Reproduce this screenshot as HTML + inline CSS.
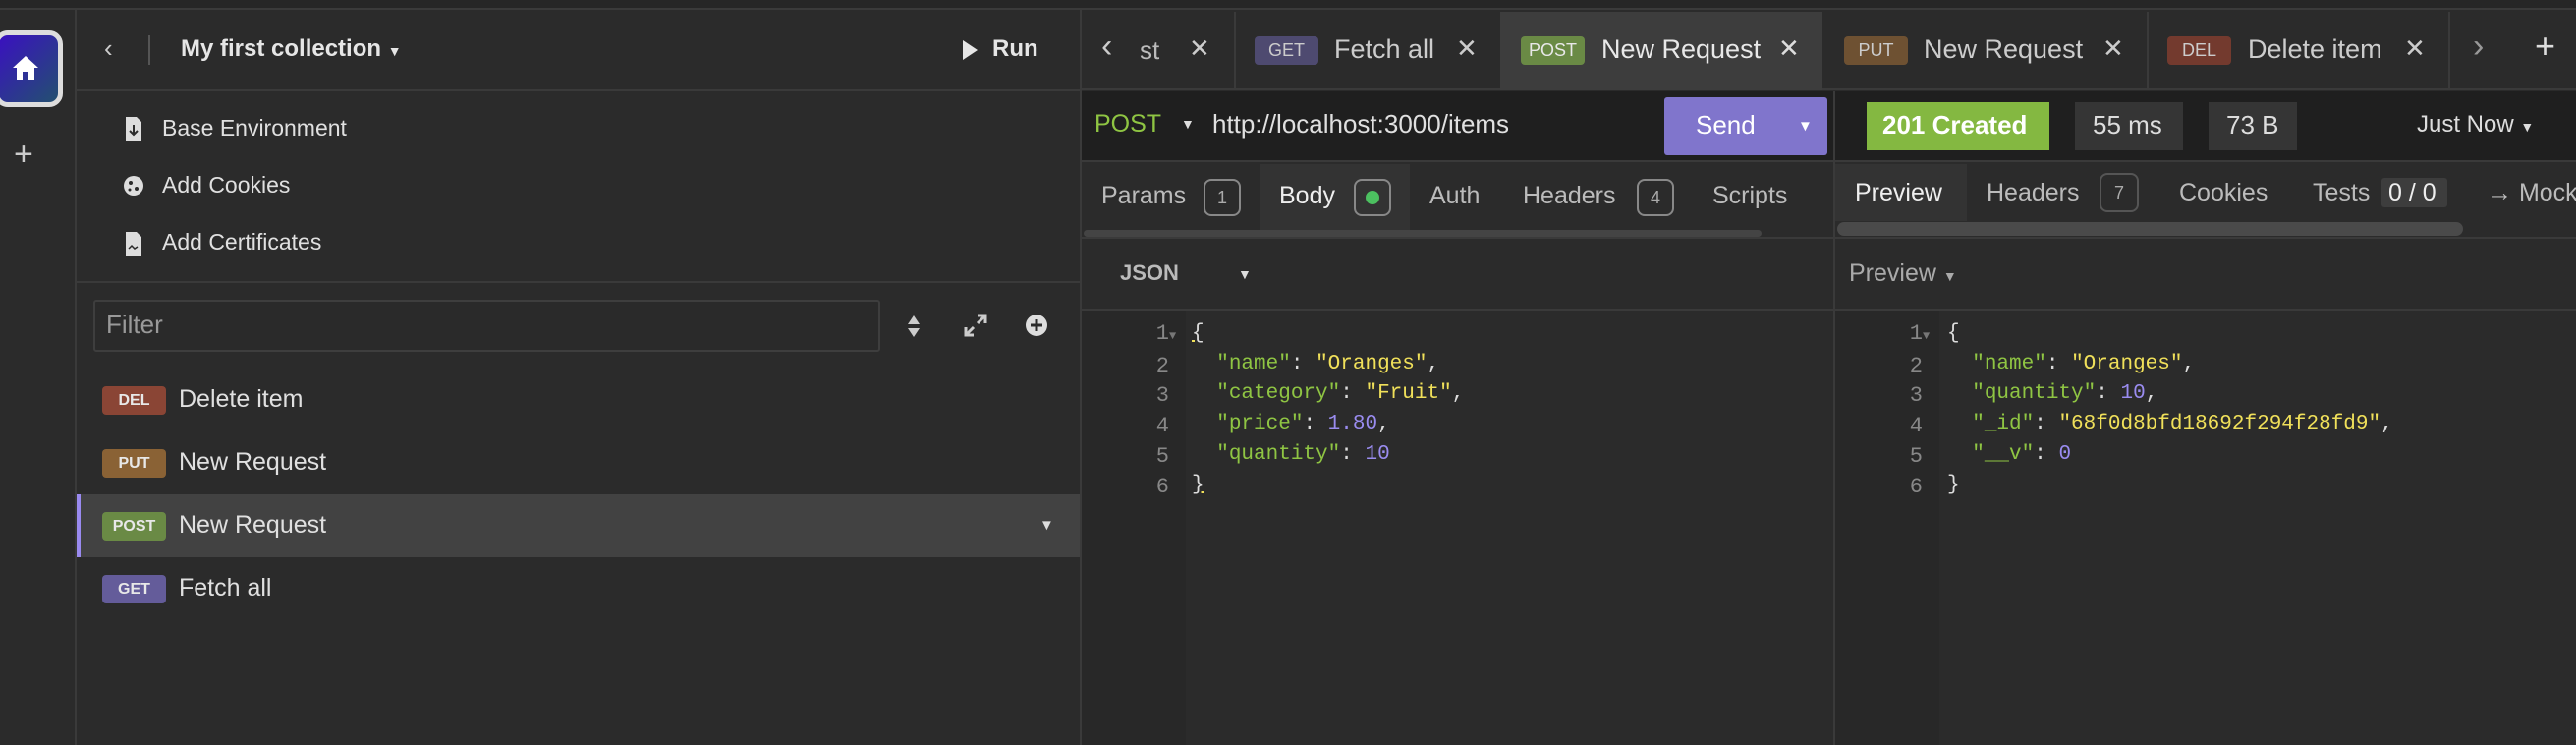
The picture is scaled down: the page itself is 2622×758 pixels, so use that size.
<!DOCTYPE html>
<html><head><meta charset="utf-8"><style>
*{margin:0;padding:0;box-sizing:border-box}
body{width:2622px;height:758px;background:#2b2b2b;font-family:"Liberation Sans",sans-serif;color:#ddd;position:relative;overflow:hidden}
.a{position:absolute}
.t{position:absolute;white-space:nowrap}
.b{position:absolute;border-radius:4px;font-size:16px;color:#e8e8e8;text-align:center;line-height:29px;height:29px;width:65px;font-weight:bold}
.mono{font-family:"Liberation Mono",monospace;font-size:21px}
.k{color:#8fc543}.s{color:#f0e05a}.n{color:#9a8cf0}
.ln{color:#888;text-align:right;width:40px}
</style></head><body>
<div class="a" style="left:0;top:0;width:2622px;height:10px;background:#262626;border-bottom:2px solid #3a3a3a"></div>
<div class="a" style="left:76px;top:10px;width:2px;height:748px;background:#3a3a3a"></div>
<div class="a" style="left:-6px;top:31px;width:70px;height:78px;border:5px solid #ddd;border-radius:14px;background:linear-gradient(135deg,#3a10c0,#235070)"></div>
<svg class="a" style="left:12px;top:55px" width="28" height="28" viewBox="0 0 28 28"><path d="M14 2 L27 14 H23 V26 H17 V18 H11 V26 H5 V14 H1 Z" fill="#fff"/></svg>
<div class="t" style="left:14px;top:138px;font-size:34px;color:#ccc;font-weight:300">+</div>
<div class="a" style="left:78px;top:91px;width:1022px;height:2px;background:#3a3a3a"></div>
<div class="t" style="left:106px;top:34px;font-size:26px;color:#ccc">‹</div>
<div class="a" style="left:151px;top:36px;width:2px;height:30px;background:#555"></div>
<div class="t" style="left:184px;top:36px;font-size:24px;font-weight:bold;color:#e6e6e6">My first collection <span style="font-size:14px">▼</span></div>
<svg class="a" style="left:978px;top:40px" width="18" height="22"><path d="M2 1 L17 11 L2 21 Z" fill="#e6e6e6"/></svg>
<div class="t" style="left:1010px;top:36px;font-size:24px;font-weight:bold;color:#e6e6e6">Run</div>
<svg class="a" style="left:126px;top:118px" width="20" height="26"><path d="M2 1h11l5 5v19H2z" fill="#ddd"/><path d="M10 9v10m-4-4l4 4 4-4" stroke="#2b2b2b" stroke-width="2" fill="none"/></svg>
<div class="t" style="left:165px;top:117px;font-size:23px;color:#e0e0e0">Base Environment</div>
<svg class="a" style="left:125px;top:177px" width="22" height="24"><circle cx="11" cy="12" r="10" fill="#ddd"/><circle cx="8" cy="9" r="2" fill="#2b2b2b"/><circle cx="14" cy="15" r="2" fill="#2b2b2b"/><circle cx="7" cy="16" r="1.5" fill="#2b2b2b"/></svg>
<div class="t" style="left:165px;top:175px;font-size:23px;color:#e0e0e0">Add Cookies</div>
<svg class="a" style="left:126px;top:235px" width="20" height="26"><path d="M2 1h11l5 5v19H2z" fill="#ddd"/><path d="M5 18l3-3 3 3 3-2" stroke="#2b2b2b" stroke-width="1.5" fill="none"/></svg>
<div class="t" style="left:165px;top:233px;font-size:23px;color:#e0e0e0">Add Certificates</div>
<div class="a" style="left:78px;top:286px;width:1022px;height:2px;background:#3a3a3a"></div>
<div class="a" style="left:95px;top:305px;width:801px;height:53px;border:2px solid #3e3e3e;border-radius:3px;background:#2a2a2a"></div>
<div class="t" style="left:108px;top:315px;font-size:26px;color:#999">Filter</div>
<svg class="a" style="left:922px;top:320px" width="16" height="24"><path d="M8 1L14 10H2zM8 23L14 14H2z" fill="#ccc"/></svg>
<svg class="a" style="left:980px;top:318px" width="26" height="26"><path d="M15 3h8v8M23 3L15 11M11 23H3v-8M3 23l8-8" stroke="#ccc" stroke-width="3" fill="none"/></svg>
<svg class="a" style="left:1042px;top:318px" width="26" height="26"><circle cx="13" cy="13" r="11" fill="#ddd"/><path d="M13 7v12M7 13h12" stroke="#2b2b2b" stroke-width="3"/></svg>
<div class="b" style="left:104px;top:393px;background:#8a4535">DEL</div>
<div class="t" style="left:182px;top:392px;font-size:25px;color:#e0e0e0">Delete item</div>
<div class="b" style="left:104px;top:457px;background:#8a6235">PUT</div>
<div class="t" style="left:182px;top:456px;font-size:25px;color:#e0e0e0">New Request</div>
<div class="a" style="left:78px;top:503px;width:1022px;height:64px;background:#424242"></div>
<div class="a" style="left:78px;top:503px;width:4px;height:64px;background:#9a8af0"></div>
<div class="b" style="left:104px;top:521px;background:#6a8a45">POST</div>
<div class="t" style="left:182px;top:520px;font-size:25px;color:#e0e0e0">New Request</div>
<div class="t" style="left:1058px;top:526px;font-size:15px;color:#ddd">▼</div>
<div class="b" style="left:104px;top:585px;background:#645c9a">GET</div>
<div class="t" style="left:182px;top:584px;font-size:25px;color:#e0e0e0">Fetch all</div>
<div class="a" style="left:1099px;top:10px;width:2px;height:748px;background:#3a3a3a"></div>
<div class="a" style="left:1101px;top:12px;width:1521px;height:80px;background:#2b2b2b;border-bottom:2px solid #3a3a3a"></div>
<div class="a" style="left:1527px;top:12px;width:328px;height:80px;background:#3d3d3d"></div>
<div class="a" style="left:1256px;top:12px;width:2px;height:80px;background:#3a3a3a"></div>
<div class="a" style="left:2185px;top:12px;width:2px;height:80px;background:#3a3a3a"></div>
<div class="a" style="left:2492px;top:12px;width:2px;height:80px;background:#3a3a3a"></div>
<div class="t" style="left:1121px;top:28px;font-size:34px;color:#ccc">‹</div>
<div class="t" style="left:1160px;top:36px;font-size:26px;color:#bbb">st</div>
<div class="t" style="left:1210px;top:34px;font-size:26px;color:#ccc">✕</div>
<div class="b" style="left:1277px;top:37px;background:#4e4a70;color:#ccc;font-size:18px;font-weight:normal">GET</div>
<div class="t" style="left:1358px;top:35px;font-size:27px;color:#ccc">Fetch all</div>
<div class="t" style="left:1482px;top:34px;font-size:26px;color:#ccc">✕</div>
<div class="b" style="left:1548px;top:37px;background:#6a8a45;font-size:18px;font-weight:normal">POST</div>
<div class="t" style="left:1630px;top:35px;font-size:27px;color:#e8e8e8">New Request</div>
<div class="t" style="left:1810px;top:34px;font-size:26px;color:#ddd">✕</div>
<div class="b" style="left:1877px;top:37px;background:#6e5132;color:#ccc;font-size:18px;font-weight:normal">PUT</div>
<div class="t" style="left:1958px;top:35px;font-size:27px;color:#ccc">New Request</div>
<div class="t" style="left:2140px;top:34px;font-size:26px;color:#ccc">✕</div>
<div class="b" style="left:2206px;top:37px;background:#733a2e;color:#ccc;font-size:18px;font-weight:normal">DEL</div>
<div class="t" style="left:2288px;top:35px;font-size:27px;color:#ccc">Delete item</div>
<div class="t" style="left:2447px;top:34px;font-size:26px;color:#ccc">✕</div>
<div class="t" style="left:2517px;top:28px;font-size:34px;color:#999">›</div>
<div class="t" style="left:2580px;top:26px;font-size:36px;color:#ddd">+</div>
<div class="a" style="left:1101px;top:93px;width:1521px;height:72px;background:#1f1f1f;border-bottom:2px solid #3a3a3a"></div>
<div class="a" style="left:1866px;top:93px;width:2px;height:665px;background:#3a3a3a"></div>
<div class="t" style="left:1114px;top:112px;font-size:25px;color:#8fc543">POST</div>
<div class="t" style="left:1202px;top:118px;font-size:14px;color:#ddd">▼</div>
<div class="t" style="left:1234px;top:111px;font-size:26px;color:#e0e0e0">http://localhost:3000/items</div>
<div class="a" style="left:1694px;top:99px;width:166px;height:59px;background:#8075cc;border-radius:3px"></div>
<div class="t" style="left:1726px;top:112px;font-size:26px;color:#fff">Send</div>
<div class="t" style="left:1830px;top:120px;font-size:15px;color:#fff">▼</div>
<div class="a" style="left:1900px;top:104px;width:186px;height:49px;background:#84b841"></div>
<div class="t" style="left:1916px;top:112px;font-size:26px;color:#fff;font-weight:bold">201 Created</div>
<div class="a" style="left:2112px;top:104px;width:110px;height:49px;background:#353535"></div>
<div class="t" style="left:2130px;top:112px;font-size:26px;color:#ddd">55 ms</div>
<div class="a" style="left:2248px;top:104px;width:90px;height:49px;background:#353535"></div>
<div class="t" style="left:2266px;top:112px;font-size:26px;color:#ddd">73 B</div>
<div class="t" style="left:2460px;top:113px;font-size:24px;color:#ddd">Just Now <span style="font-size:14px">▼</span></div>
<div class="a" style="left:1101px;top:167px;width:765px;height:68px;background:#2b2b2b"></div>
<div class="a" style="left:1283px;top:167px;width:152px;height:68px;background:#333"></div>
<div class="t" style="left:1121px;top:185px;font-size:25px;color:#bbb">Params</div>
<div class="a" style="left:1225px;top:182px;width:38px;height:38px;border:2px solid #888;border-radius:8px;font-size:18px;color:#aaa;text-align:center;line-height:34px">1</div>
<div class="t" style="left:1302px;top:185px;font-size:25px;color:#eee">Body</div>
<div class="a" style="left:1378px;top:182px;width:38px;height:38px;border:2px solid #888;border-radius:8px"></div>
<div class="a" style="left:1390px;top:194px;width:14px;height:14px;border-radius:50%;background:#4cc060"></div>
<div class="t" style="left:1455px;top:185px;font-size:25px;color:#bbb">Auth</div>
<div class="t" style="left:1550px;top:185px;font-size:25px;color:#bbb">Headers</div>
<div class="a" style="left:1666px;top:182px;width:38px;height:38px;border:2px solid #888;border-radius:8px;font-size:18px;color:#aaa;text-align:center;line-height:34px">4</div>
<div class="t" style="left:1743px;top:185px;font-size:25px;color:#bbb">Scripts</div>
<div class="a" style="left:1103px;top:234px;width:690px;height:7px;background:#444;border-radius:4px"></div>
<div class="a" style="left:1101px;top:241px;width:1521px;height:2px;background:#3a3a3a"></div>
<div class="a" style="left:1868px;top:167px;width:134px;height:58px;background:#333"></div>
<div class="t" style="left:1888px;top:182px;font-size:25px;color:#eee">Preview</div>
<div class="t" style="left:2022px;top:182px;font-size:25px;color:#bbb">Headers</div>
<div class="a" style="left:2137px;top:176px;width:40px;height:40px;border:2px solid #555;border-radius:8px;font-size:18px;color:#aaa;text-align:center;line-height:36px">7</div>
<div class="t" style="left:2218px;top:182px;font-size:25px;color:#bbb">Cookies</div>
<div class="t" style="left:2354px;top:182px;font-size:25px;color:#bbb">Tests</div>
<div class="a" style="left:2424px;top:181px;width:67px;height:30px;background:#3d3d3d;border-radius:3px"></div>
<div class="t" style="left:2431px;top:182px;font-size:25px;color:#eee">0 / 0</div>
<div class="t" style="left:2532px;top:182px;font-size:25px;color:#bbb">→ Mock</div>
<div class="a" style="left:1870px;top:226px;width:637px;height:14px;background:#4a4a4a;border-radius:7px"></div>
<div class="t" style="left:1140px;top:265px;font-size:22px;color:#bbb;font-weight:bold">JSON</div>
<div class="t" style="left:1260px;top:271px;font-size:14px;color:#ddd">▼</div>
<div class="t" style="left:1882px;top:264px;font-size:25px;color:#aaa">Preview <span style="font-size:14px">▼</span></div>
<div class="a" style="left:1101px;top:314px;width:1521px;height:2px;background:#3a3a3a"></div>
<div class="a" style="left:1101px;top:316px;width:106px;height:442px;background:#282828"></div>
<div class="a" style="left:1868px;top:316px;width:106px;height:442px;background:#282828"></div>
<div class="a mono" style="left:1150px;top:325px;line-height:30.7px;font-size:22px">
<div><span class="ln" style="display:inline-block;width:40px">1</span><span style="color:#777;font-size:12px">▼</span></div>
<div class="ln">2</div><div class="ln">3</div><div class="ln">4</div><div class="ln">5</div><div class="ln">6</div></div>
<div class="a mono" style="left:1213px;top:325px;line-height:30.7px;white-space:pre;color:#ddd"><span style="text-decoration:underline;text-decoration-color:#f0e05a">{</span>
  <span class="k">"name"</span>: <span class="s">"Oranges"</span>,
  <span class="k">"category"</span>: <span class="s">"Fruit"</span>,
  <span class="k">"price"</span>: <span class="n">1.80</span>,
  <span class="k">"quantity"</span>: <span class="n">10</span>
<span style="text-decoration:underline;text-decoration-color:#f0e05a">}</span></div>
<div class="a mono" style="left:1917px;top:325px;line-height:30.7px;font-size:22px">
<div><span class="ln" style="display:inline-block;width:40px">1</span><span style="color:#777;font-size:12px">▼</span></div>
<div class="ln">2</div><div class="ln">3</div><div class="ln">4</div><div class="ln">5</div><div class="ln">6</div></div>
<div class="a mono" style="left:1982px;top:325px;line-height:30.7px;white-space:pre;color:#ddd">{
  <span class="k">"name"</span>: <span class="s">"Oranges"</span>,
  <span class="k">"quantity"</span>: <span class="n">10</span>,
  <span class="k">"_id"</span>: <span class="s">"68f0d8bfd18692f294f28fd9"</span>,
  <span class="k">"__v"</span>: <span class="n">0</span>
}</div>
</body></html>
